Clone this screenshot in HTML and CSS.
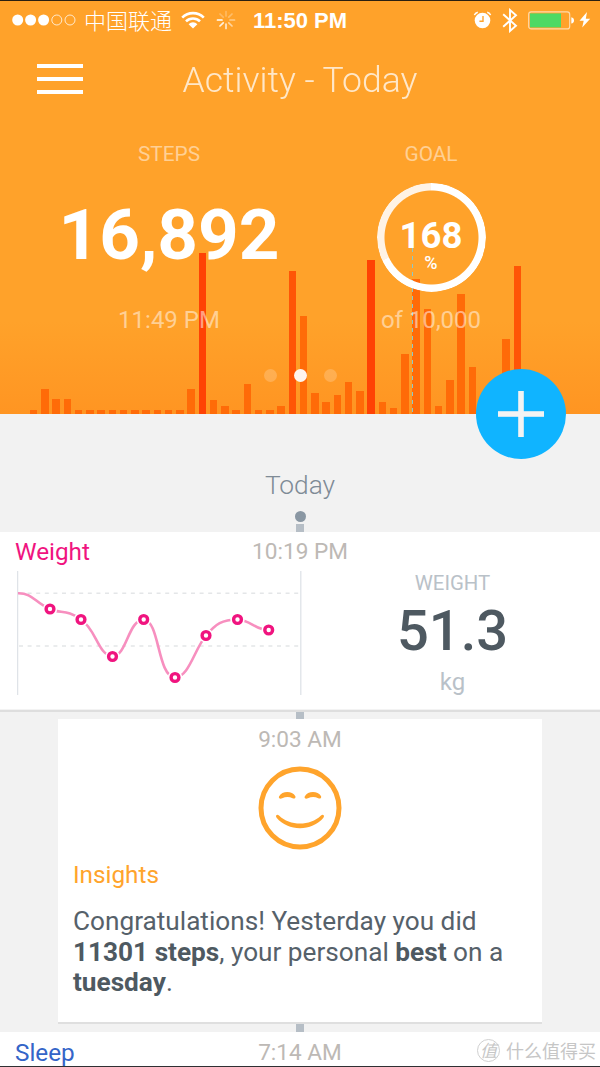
FILE: index.html
```html
<!DOCTYPE html>
<html lang="en">
<head>
  <meta charset="UTF-8" />
  <meta name="viewport" content="width=device-width, initial-scale=1.0"/>
  <title>Activity - Today</title>
  <link rel="stylesheet" href="styles.css">
</head>
<body>
  <div class="app">
    <header class="hero">
      <div class="bars" id="bars"></div>
      <div class="now-line"></div>

      <div class="status-bar">
        <div class="status-left">
          <svg width="64" height="14" viewBox="0 0 64 14" fill="#fff">
            <circle cx="5.7" cy="7" r="5.5"/>
            <circle cx="18.6" cy="7" r="5.5"/>
            <circle cx="31.6" cy="7" r="5.5"/>
            <g fill="none" stroke="#fff" stroke-opacity=".75">
              <circle cx="44.8" cy="7" r="5"/>
              <circle cx="58" cy="7" r="5"/>
            </g>
          </svg>
          <span class="carrier">中国联通</span>
          <svg class="wifi" width="24" height="18" viewBox="0 0 24 18">
            <g fill="none" stroke="#fff" stroke-width="2.6">
              <path d="M1.2 6.6a15.2 15.2 0 0 1 21.6 0"/>
              <path d="M5 10.4a9.9 9.9 0 0 1 14 0"/>
            </g>
            <path fill="#fff" d="M7.6 13.2a6.2 6.2 0 0 1 8.8 0L12 17.4z"/>
          </svg>
          <svg class="spinner" width="20" height="20" viewBox="0 0 20 20" stroke="#fff" stroke-width="1.7" stroke-linecap="round">
            <path d="M10 1.5v4.5" opacity=".25"/>
            <path d="M16 4l-3.2 3.2" opacity=".3"/>
            <path d="M18.5 10H14" opacity=".45"/>
            <path d="M16 16l-3.2-3.2" opacity=".55"/>
            <path d="M10 18.5V14" opacity=".75"/>
            <path d="M4 16l3.2-3.2" opacity=".85"/>
            <path d="M1.5 10H6"/>
            <path d="M4 4l3.2 3.2" opacity=".25"/>
          </svg>
        </div>
        <div class="clock">11:50 PM</div>
        <div class="status-right">
          <svg width="19" height="18" viewBox="0 0 19 18">
            <circle cx="9.5" cy="9.5" r="7.8" fill="#fff"/>
            <path d="M1.4 4.2Q2 1.8 4.8 1.2M17.6 4.2Q17 1.8 14.2 1.2" fill="none" stroke="#fff" stroke-width="1.4"/>
            <path d="M10 5v5.2H6.4" fill="none" stroke="#ffa42c" stroke-width="1.4"/>
          </svg>
          <svg class="bluetooth" width="16" height="25" viewBox="0 0 16 25" fill="none" stroke="#fff" stroke-width="1.9">
            <path d="M1.2 6.2L14 17.8 8 23V2l6 5.2L1.2 18.8"/>
          </svg>
          <svg class="battery" width="47" height="19" viewBox="0 0 47 19">
            <rect x=".7" y=".9" width="41" height="17" rx="2.5" fill="none" stroke="#fff" stroke-opacity=".6" stroke-width="1.2"/>
            <rect x="2" y="2.4" width="31" height="14" fill="#4cd964"/>
            <path d="M43.3 6.3q2.7.5 2.7 3.1t-2.7 3.1z" fill="#fff"/>
          </svg>
          <svg class="bolt" width="12" height="18" viewBox="0 0 12 18" fill="#fff">
            <path d="M8 1L.5 9.7h4.2L3.2 16.5 11.2 7.8H6.8z"/>
          </svg>
        </div>
      </div>

      <div class="title-bar">
        <svg class="menu" width="46" height="32" viewBox="0 0 46 32" fill="#fff">
          <rect y="1" width="46" height="4"/>
          <rect y="14" width="46" height="4"/>
          <rect y="27" width="46" height="4"/>
        </svg>
        <h1>Activity - Today</h1>
      </div>

      <div class="stats">
        <div class="stat">
          <div class="stat-label">STEPS</div>
          <div class="stat-value steps">16,892</div>
          <div class="stat-note">11:49 PM</div>
        </div>
        <div class="stat">
          <div class="stat-label">GOAL</div>
          <div class="stat-value">
            <div class="ring">
              <span class="ring-number">168</span>
              <span class="ring-unit">%</span>
            </div>
          </div>
          <div class="stat-note">of 10,000</div>
        </div>
      </div>

      <div class="pager">
        <span class="page"></span>
        <span class="page active"></span>
        <span class="page"></span>
      </div>

      <button class="add-btn" aria-label="Add">
        <svg width="46" height="46" viewBox="0 0 46 46" fill="#f3f3f3">
          <rect x="0" y="20.2" width="46" height="5.6"/>
          <rect x="20.2" y="0" width="5.6" height="46"/>
        </svg>
      </button>
    </header>

    <main class="timeline">
      <h2 class="day">Today</h2>
      <div class="day-dot"></div>
      <div class="connector"></div>

      <section class="card weight">
        <div class="card-header">
          <span class="card-title">Weight</span>
          <span class="card-time">10:19 PM</span>
        </div>
        <div class="card-body">
          <svg class="weight-chart" width="286" height="124" viewBox="17 571 286 124" fill="none">
            <path d="M17.6 571v124M300.8 571v124" stroke="#dfe3e8" stroke-width="1.3"/>
            <path d="M19 593.3h281M19 646h281" stroke="#e4e6e8" stroke-width="1.5" stroke-dasharray="4 4.6"/>
            <path d="M18 593.3C33 593 35 603 50 609C60 614 67 609 81 619.5C96 629 98 655 112.5 656.5C127 656 128 620 143.7 619.5C160 621 157 676 175 677.5C189 677 194 650 206 635.5C216 624 222 619.5 237.5 619.5C251 620 255 630 268.7 630" stroke="#f78fbf" stroke-width="2.6"/>
            <g id="weightPoints" class="points"></g>
          </svg>
          <div class="measure">
            <div class="measure-label">WEIGHT</div>
            <div class="measure-value">51.3</div>
            <div class="measure-unit">kg</div>
          </div>
        </div>
      </section>

      <div class="connector short"></div>

      <section class="card insight">
        <div class="card-time">9:03 AM</div>
        <svg class="smiley" width="84" height="84" viewBox="0 0 84 84" fill="#ffa42c">
          <circle cx="42" cy="42" r="39" fill="none" stroke="#ffa42c" stroke-width="5"/>
          <path d="M21 30.5C24 24.8 34 24.5 37.4 30.2C38 32.4 36 33 34.6 32.2C31 30.6 27.5 30.8 24.2 32.3C22 33.2 20.4 32.4 21 30.5z"/>
          <path d="M46.7 30.5C49.7 24.8 59.7 24.5 63.1 30.2C63.7 32.4 61.7 33 60.3 32.2C56.7 30.6 53.2 30.8 49.9 32.3C47.7 33.2 46.1 32.4 46.7 30.5z"/>
          <path d="M21 49.4C32 60.2 52 60.2 63 49.4C65.2 47.9 67 49.8 65.4 51.8C54 65.6 30 65.6 18.6 51.8C17 49.8 18.8 47.9 21 49.4z"/>
        </svg>
        <h3>Insights</h3>
        <p>Congratulations! Yesterday you did <b>11301 steps</b>, your personal <b>best</b> on a <b>tuesday</b>.</p>
      </section>

      <div class="connector"></div>

      <section class="card sleep">
        <div class="card-header">
          <span class="card-title">Sleep</span>
          <span class="card-time">7:14 AM</span>
        </div>
      </section>
    </main>

    <div class="watermark"><span class="watermark-logo">值</span>什么值得买</div>
  </div>

  <script>
    // Bar heights in px, one per half hour slot
    const steps = [
      3.5, 24.5, 15, 15, 3.5, 3.5, 3.5, 3.5, 3.5, 3.5, 3.5, 3.5, 3.5, 3.5, 24.5,
      161, 13.5, 7.5, 3.5, 30, 3.5, 3.5, 7.5, 142.5, 97.5, 20.5, 11.5, 18.5, 32,
      22.5, 153.5, 11.5, 6, 60, 135, 105, 7.5, 33.5, 120, 46.5, 0, 0, 75, 148
    ];

    const bars = document.getElementById('bars');
    steps.forEach(height => {
      const bar = document.createElement('div');
      bar.className = 'bar';
      if (height > 140) bar.classList.add('high');
      if (height > 150) bar.classList.add('peak');
      bar.style.height = height + 'px';
      bars.appendChild(bar);
    });

    const weights = [
      [50, 609], [81, 619.5], [112.5, 656.5], [143.7, 619.5],
      [175, 677.5], [206, 635.5], [237.5, 619.5], [268.7, 630]
    ];

    document.getElementById('weightPoints').innerHTML = weights.map(([x, y]) =>
      `<circle class="halo" cx="${x}" cy="${y}" r="7.2"/><circle class="point" cx="${x}" cy="${y}" r="3.9"/>`
    ).join('');
  </script>
</body>
</html>
```
FILE: styles.css
```css
* {
  box-sizing: border-box;
}

body {
  margin: 0;
  font-family: Roboto, "Noto Sans CJK SC", sans-serif;
  background: #f2f2f2;
}

h1, h2, h3, p {
  margin: 0;
}

.app {
  position: relative;
  height: 1067px;
  overflow: hidden;
  border-top: 1px solid #2b2010;
  border-bottom: 1px solid #2f3033;
}

/* Header */
.hero {
  position: relative;
  height: 412.5px;
  background: linear-gradient(to bottom, #ffa22a 0, #ffa22a 320px, #ff9522 100%);
  color: white;
}

.bars {
  position: absolute;
  left: 29.9px;
  bottom: 0;
  display: flex;
  align-items: flex-end;
  gap: 3.67px;
}

.bar {
  width: 7.6px;
  background: #ff6b08;
}

.bar.high {
  background: #ff5506;
}

.bar.peak {
  background: #ff4204;
}

.now-line {
  position: absolute;
  left: 411.5px;
  top: 247px;
  bottom: 0;
  width: 1.6px;
  background: repeating-linear-gradient(to bottom, #8cc8c8 0, #8cc8c8 4px, transparent 4px, transparent 8px);
}

.status-bar {
  position: relative;
  display: grid;
  grid-template-columns: 1fr auto 1fr;
  align-items: center;
  height: 38px;
  padding: 0 9px 0 12px;
}

.status-left,
.status-right {
  display: flex;
  align-items: center;
}

.status-right {
  justify-content: flex-end;
}

.carrier {
  margin: -2px 0 0 8px;
  font-family: "Noto Sans CJK SC", sans-serif;
  font-size: 22px;
  font-weight: 300;
  line-height: 30px;
}

.wifi {
  margin-left: 9px;
}

.spinner {
  margin-left: 11px;
}

.clock {
  margin-left: -3px;
  padding-top: 1px;
  font-family: "Liberation Sans", sans-serif;
  font-size: 22px;
  font-weight: bold;
  line-height: 26px;
}

.bluetooth {
  margin-left: 10px;
}

.battery {
  margin-left: 10px;
}

.bolt {
  margin-left: 4px;
}

.title-bar {
  position: relative;
  display: grid;
  grid-template-columns: 1fr auto 1fr;
  align-items: center;
  height: 80px;
  padding: 0 37px;
}

.title-bar h1 {
  padding-top: 2px;
  font-size: 35.5px;
  font-weight: 300;
  line-height: 40px;
  opacity: 0.75;
}

.stats {
  position: relative;
  display: grid;
  grid-template-columns: 1fr 1fr;
  padding: 23px 38px 0;
  text-align: center;
}

.stat-label {
  font-size: 20.8px;
  line-height: 24px;
  color: rgba(255, 255, 255, 0.5);
}

.stat-value {
  display: flex;
  align-items: center;
  justify-content: center;
  height: 140px;
  font-size: 71px;
  font-weight: bold;
}

.stat-value.steps {
  padding-bottom: 4px;
}

.stat-note {
  font-size: 24px;
  line-height: 28px;
  color: rgba(255, 255, 255, 0.5);
}

.ring {
  position: relative;
  display: flex;
  flex-direction: column;
  align-items: center;
  width: 109px;
  height: 109px;
  margin-top: 3px;
  padding-top: 37px;
}

.ring::before {
  content: "";
  position: absolute;
  inset: 0;
  border-radius: 50%;
  background: conic-gradient(white 68%, #fff3e5 68%);
  -webkit-mask: radial-gradient(circle, transparent 46.5px, black 47.5px);
  mask: radial-gradient(circle, transparent 46.5px, black 47.5px);
}

.ring-number {
  font-size: 36.5px;
  line-height: 32px;
}

.ring-unit {
  margin-top: 3px;
  font-size: 18px;
  font-weight: 500;
  line-height: 16px;
}

.pager {
  position: relative;
  display: flex;
  justify-content: center;
  gap: 17px;
  margin-top: 35px;
}

.page {
  width: 13px;
  height: 13px;
  border-radius: 50%;
  background: rgba(255, 255, 255, 0.2);
}

.page.active {
  background: #fff5ef;
}

.add-btn {
  position: absolute;
  right: 34px;
  bottom: -45px;
  z-index: 1;
  display: flex;
  align-items: center;
  justify-content: center;
  width: 90px;
  height: 90px;
  padding: 0;
  border: none;
  border-radius: 50%;
  background: #10b4ff;
  cursor: pointer;
}

/* Timeline */
.timeline {
  display: flex;
  flex-direction: column;
  align-items: center;
  padding-top: 55.5px;
}

.day {
  font-size: 26.3px;
  font-weight: 300;
  line-height: 32px;
  color: #7f8b96;
}

.day-dot {
  width: 11px;
  height: 11px;
  margin: 10px 0 2px;
  border-radius: 50%;
  background: #8a97a3;
}

.connector {
  width: 8px;
  height: 8px;
  background: #b6bec6;
}

.connector.short {
  height: 7px;
}

.card {
  background: white;
}

.card-header {
  display: grid;
  grid-template-columns: 1fr auto 1fr;
  height: 39px;
  padding: 6px 15px 0;
  line-height: 28px;
}

.card-title {
  font-size: 24.3px;
}

.card-time {
  font-size: 22.6px;
  line-height: 28px;
  color: #bdb9b5;
}

.weight {
  width: 100%;
  height: 180px;
  border-bottom: 2px solid #dedede;
  box-shadow: inset 0 -1px #f3f3f3;
}

.weight .card-title {
  color: #f0147f;
}

.card-body {
  display: flex;
  padding-left: 17px;
}

.points .halo {
  fill: white;
}

.points .point {
  fill: white;
  stroke: #f0147f;
  stroke-width: 3.4;
}

.measure {
  flex: 1;
  padding-left: 2px;
  text-align: center;
  color: #b9c1c8;
}

.measure-label {
  font-size: 20.4px;
  line-height: 24px;
}

.measure-value {
  margin-top: 4px;
  font-size: 56px;
  font-weight: 500;
  line-height: 64px;
  color: #4e5961;
}

.measure-unit {
  margin-top: 5px;
  font-size: 24px;
  line-height: 28px;
}

.insight {
  display: flex;
  flex-direction: column;
  align-items: center;
  width: 484px;
  height: 305px;
  padding: 7px 15px 0;
  border-bottom: 2px solid #dfdfdf;
}

.smiley {
  margin-top: 12px;
}

.insight h3 {
  align-self: stretch;
  margin-top: 10px;
  font-size: 24.3px;
  font-weight: normal;
  line-height: 30px;
  color: #ffa42c;
}

.insight p {
  align-self: stretch;
  margin-top: 16px;
  font-size: 26.2px;
  line-height: 30.5px;
  color: #56616a;
}

.insight b {
  color: #4e5961;
}

.sleep {
  width: 100%;
  height: 40px;
}

.sleep .card-header {
  padding-top: 7px;
}

.sleep .card-title {
  color: #3465c8;
}

.watermark {
  position: absolute;
  right: 4px;
  bottom: 4px;
  display: flex;
  align-items: center;
  gap: 6px;
  font-family: "Noto Sans CJK SC", sans-serif;
  font-size: 18px;
  line-height: 24px;
  color: #c6c6c6;
}

.watermark-logo {
  width: 23px;
  height: 23px;
  border: 1px solid #d0d0d0;
  border-radius: 50%;
  font-size: 17px;
  font-style: italic;
  line-height: 20px;
  text-align: center;
}
```
